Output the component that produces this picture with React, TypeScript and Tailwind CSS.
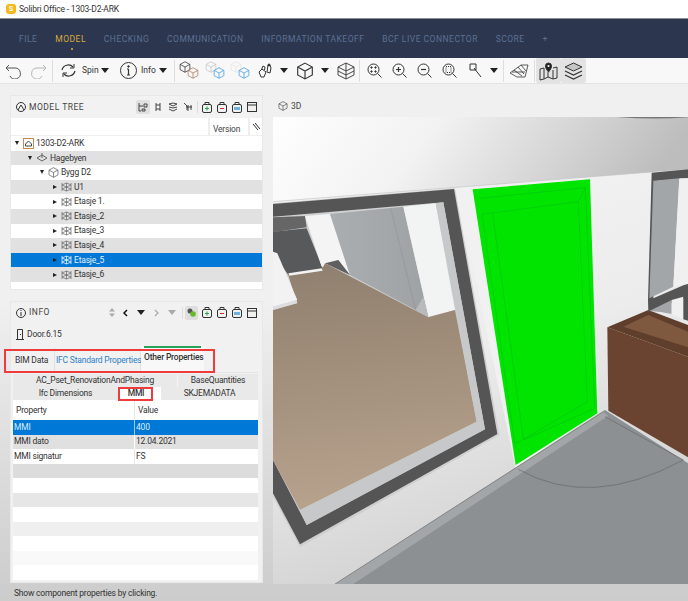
import type { ReactNode } from "react";

const FONT = "font-['Roboto','Noto_Sans',sans-serif]";

function Ic({ w = 16, h = 16, vb, cls = "", children }: { w?: number; h?: number; vb?: string; cls?: string; children: ReactNode }) {
  return (
    <svg width={w} height={h} viewBox={vb ?? `0 0 ${w} ${h}`} fill="none" stroke="#333" strokeWidth="1" className={`shrink-0 ${cls}`}>
      {children}
    </svg>
  );
}

function Caret({ cls = "" }: { cls?: string }) {
  return (
    <svg width="8" height="5" viewBox="0 0 8 5" className={`shrink-0 ${cls}`}>
      <path d="M0 0h8L4 5z" fill="#222" />
    </svg>
  );
}

function Cube({ s = 16, color = "#333", cls = "" }: { s?: number; color?: string; cls?: string }) {
  return (
    <svg width={s} height={s} viewBox="0 0 16 16" fill="none" stroke={color} strokeWidth="1" className={`shrink-0 ${cls}`}>
      <path d="M8 1l6.500 3.500v7L8 15l-6.500-3.500v-7zM1.500 4.500L8 8l6.500-3.500M8 8v7" />
    </svg>
  );
}

function Loupe({ cls = "", children }: { cls?: string; children?: ReactNode }) {
  return (
    <Ic w={15} h={15} cls={cls}>
      <circle cx="6.500" cy="6.500" r="5.500" />
      <path d="M10.500 10.500l4 4" />
      {children}
    </Ic>
  );
}

function Bag({ inner, cls = "" }: { inner?: ReactNode; cls?: string }) {
  return (
    <Ic w={10} h={11} cls={cls}>
      <rect x="0.500" y="2.500" width="9" height="8" rx="1.500" />
      <path d="M3 2.500v-2h4v2" />
      {inner}
    </Ic>
  );
}

function PanelTools() {
  return (
    <>
      <Bag inner={<path d="M5 4.500v4M3 6.500h4" stroke="#22a34a" />} />
      <Bag cls="ml-[5px]" inner={<path d="M3 6.500h4" stroke="#d22" />} />
      <Bag cls="ml-[5px]" inner={<rect x="2" y="5" width="6" height="3" fill="#6fb0e0" stroke="none" />} />
      <Ic w={10} h={10} cls="ml-[5px]">
        <rect x="0.500" y="0.500" width="9" height="9" />
        <path d="M0.500 3h9" />
      </Ic>
    </>
  );
}

function TreeGlyph({ d, cls = "" }: { d: string; cls?: string }) {
  return (
    <Ic w={10} h={10} cls={cls}>
      <path d={d} strokeWidth="0.900" />
    </Ic>
  );
}

const NAV = ["FILE", "MODEL", "CHECKING", "COMMUNICATION", "INFORMATION TAKEOFF", "BCF LIVE CONNECTOR", "SCORE", "+"];

function TopNav() {
  return (
    <div className="h-[40px] bg-[#2c364f] flex items-center pl-[19px] gap-[17.800px] border-t border-[#8a8f96]">
      {NAV.map((n) => (
        <div key={n} className="relative">
          <span className={`block leading-[12px] text-[8.500px] tracking-[0.500px] ${n === "MODEL" ? "text-[#d8a93c]" : "text-[#5d7193]"}`}>{n}</span>
          {n === "MODEL" && <span className="absolute left-1/2 top-[15px] w-[2px] h-[2px] rounded-full bg-[#e5b23a]" />}
        </div>
      ))}
    </div>
  );
}

function Toolbar() {
  return (
    <div className="h-[26px] bg-[#f8f8f8] border-b border-[#e4e4e4] flex items-center pl-[5px] text-[8.500px] text-[#333]">
      <Ic w={17} h={17}>
        <path d="M4 3L1 6l3 3M1 6h9a5.500 5.500 0 1 1-5 8" stroke="#555" />
      </Ic>
      <Ic w={17} h={17} cls="ml-[8px]">
        <path d="M13 3l3 3-3 3M16 6H7a5.500 5.500 0 1 0 5 8" stroke="#b5b5b5" />
      </Ic>
      <div className="w-px h-[22px] bg-[#ddd] ml-[5px]" />
      <Ic w={17} h={15} cls="ml-[7px]">
        <path d="M2 7a6.500 6.500 0 0 1 11-3M15 8a6.500 6.500 0 0 1-11 3" strokeWidth="1.200" />
        <path d="M14 1v4h-4M3 14v-4h4" strokeWidth="1" />
      </Ic>
      <span className="ml-[5px] w-[15px]">Spin</span>
      <Caret cls="ml-[4px]" />
      <Ic w={17} h={17} cls="ml-[11px]">
        <circle cx="8.500" cy="8.500" r="8" />
        <path d="M8.500 7v6M7 13h3M7 7h1.500" strokeWidth="1.200" />
        <circle cx="8.500" cy="4.500" r="0.800" fill="#333" />
      </Ic>
      <span className="ml-[4px] w-[15px]">Info</span>
      <Caret cls="ml-[3px]" />
      <div className="w-px h-[22px] bg-[#ddd] ml-[7px]" />
      <div className="ml-[4px] flex w-[20px] items-start">
        <Cube s={12} cls="-mt-[2px]" />
        <Cube s={12} color="#a8795a" cls="-ml-[4px] mt-[4px]" />
      </div>
      <div className="ml-[6px] flex w-[20px] items-start">
        <Cube s={12} color="#c4c4c4" cls="-mt-[2px]" />
        <Cube s={12} color="#3f9fe6" cls="-ml-[4px] mt-[4px]" />
      </div>
      <div className="ml-[5px] flex w-[20px] items-start">
        <Cube s={12} color="#e4e4e4" cls="-mt-[2px]" />
        <Cube s={12} color="#3f9fe6" cls="-ml-[4px] mt-[4px]" />
      </div>
      <Ic w={15} h={16} cls="ml-[8px]">
        <path d="M1 9l3-3 4 3-2 5H3zM3.500 6.500L5 3l2 1-.5 3M9 9l1-7h2l1 3-1 5z" />
        <circle cx="11" cy="2" r="1" fill="#333" />
      </Ic>
      <Caret cls="ml-[7px]" />
      <Cube s={18} cls="ml-[8px]" />
      <Caret cls="ml-[7px]" />
      <Ic w={18} h={18} cls="ml-[8px]">
        <path d="M1 5l8 4 8-4-8-4zM1 5v8M17 5v8M1 9l8 4 8-4M9 1v16M1 13l8 4 8-4" strokeWidth="0.900" />
      </Ic>
      <div className="w-px h-[22px] bg-[#ddd] ml-[4px]" />
      <Loupe cls="ml-[7px]">
        <circle cx="4.500" cy="4.500" r="0.700" fill="#333" />
        <circle cx="8.500" cy="4.500" r="0.700" fill="#333" />
        <circle cx="4.500" cy="8.500" r="0.700" fill="#333" />
        <circle cx="8.500" cy="8.500" r="0.700" fill="#333" />
      </Loupe>
      <Loupe cls="ml-[10px]">
        <path d="M6.500 4v5M4 6.500h5" strokeWidth="1.200" />
      </Loupe>
      <Loupe cls="ml-[10px]">
        <path d="M4 6.500h5" strokeWidth="1.200" />
      </Loupe>
      <Loupe cls="ml-[10px]">
        <rect x="4" y="3.500" width="5" height="6" strokeDasharray="1 1" />
      </Loupe>
      <Ic w={13} h={15} cls="ml-[12px]">
        <path d="M1 1h6v6H1zM5 5l7 9" />
      </Ic>
      <Caret cls="ml-[8px]" />
      <div className="w-px h-[22px] bg-[#ddd] ml-[5px]" />
      <Ic w={20} h={14} cls="ml-[5px]">
        <path d="M1 9l11-8h7l-3 12H8zM5 6l8 6M9 3l6 7M12 1l5 6M3 8h13" strokeWidth="0.800" />
      </Ic>
      <div className="w-px h-[22px] bg-[#ddd] ml-[5px]" />
      <div className="ml-[1px] w-[25px] h-[25px] bg-[#e3e3e3] rounded-[2px] flex items-center justify-center">
        <Ic w={19} h={20}>
          <path d="M1 8l4-1v11l-4 1zM5 18l4-2 5 2 4-1V6l-4 1M9 16v-5M14 18V9" />
          <path d="M9.500 11C7 8 6.500 6.500 6.500 5a3 3 0 0 1 6 0c0 1.500-.5 3-3 6z" fill="#222" />
          <circle cx="9.500" cy="5" r="1.100" fill="#fff" stroke="none" />
        </Ic>
      </div>
      <div className="w-[25px] h-[25px] bg-[#e3e3e3] rounded-[2px] flex items-center justify-center">
        <Ic w={19} h={18}>
          <path d="M9.500 1L18 5l-8.500 4L1 5z" fill="#c5c5c5" />
          <path d="M1 9l8.500 4L18 9M1 13l8.500 4 8.500-4" strokeWidth="1.200" />
        </Ic>
      </div>
    </div>
  );
}

const TREE: { label: string; level: number; open?: boolean; selected?: boolean }[] = [
  { label: "1303-D2-ARK", level: 0, open: true },
  { label: "Hagebyen", level: 1, open: true },
  { label: "Bygg D2", level: 2, open: true },
  { label: "U1", level: 3 },
  { label: "Etasje 1.", level: 3 },
  { label: "Etasje_2", level: 3 },
  { label: "Etasje_3", level: 3 },
  { label: "Etasje_4", level: 3 },
  { label: "Etasje_5", level: 3, selected: true },
  { label: "Etasje_6", level: 3 },
];

const INDENT = ["pl-[4px]", "pl-[17px]", "pl-[29px]", "pl-[42px]"];

function NodeIcon({ level, selected }: { level: number; selected?: boolean }) {
  const c = selected ? "#fff" : "#666";
  if (level === 0)
    return (
      <svg width="11" height="11" viewBox="0 0 11 11" fill="none" stroke="#444" className="ml-[4px] shrink-0">
        <rect x="0.500" y="0.500" width="10" height="10" stroke="#c58a55" />
        <path d="M2.500 8V6L5.500 3l3 3v2z" />
      </svg>
    );
  if (level === 1)
    return (
      <svg width="12" height="9" viewBox="0 0 12 9" fill="none" stroke="#666" className="ml-[4px] shrink-0">
        <path d="M1 5l5-3 5 3-5 3zM6 0v5" />
      </svg>
    );
  if (level === 2) return <Cube s={11} color="#555" cls="ml-[4px]" />;
  return (
    <svg width="11" height="10" viewBox="0 0 11 10" fill="none" stroke={c} className="ml-[4px] shrink-0">
      <path d="M1 1v8M10 1v8M1 3l4.500-2L10 3 5.500 5zM1 7l4.500-2L10 7 5.500 9zM5.500 1v8" strokeWidth="0.700" />
    </svg>
  );
}

function ModelTree() {
  return (
    <section className="h-[195px] flex flex-col bg-white border border-[#e8e8e8]">
      <div className="h-[22px] shrink-0 bg-[#f2f2f2] flex items-center pl-[5px] pr-[5px]">
        <Ic w={10} h={10}>
          <circle cx="5" cy="5" r="4.500" />
          <path d="M2 8l3-5 3 5" />
        </Ic>
        <span className="ml-[3px] text-[8.500px] tracking-[0.500px] text-[#444]">MODEL TREE</span>
        <div className="ml-auto mr-[3px] w-[14px] h-[14px] rounded-[2px] bg-[#e0e0e0] flex items-center justify-center">
          <TreeGlyph d="M1 1v8h2M1 4h4M6 2h3v3H6zM4 7h3v2H4z" />
        </div>
        <TreeGlyph cls="mr-[5px]" d="M3 1v8M7 1v8M3 3h4M3 7h4" />
        <TreeGlyph cls="mr-[5px]" d="M1 2l4-1 4 1-4 2zM1 5l4 1 4-1M1 7l4 2 4-2" />
        <TreeGlyph cls="mr-[4px]" d="M1 1l3 3v4M5 3v6M8 3v5M3 5h6" />
        <div className="w-px h-[12px] bg-[#ddd] mr-[4px]" />
        <PanelTools />
      </div>
      <div className="h-[18px] shrink-0 flex justify-end text-[8.500px] tracking-[-0.200px] text-[#444] border-b border-[#eee]">
        <div className="w-[40px] border-l-2 border-[#eee] pl-[3px] pt-[5px]">Version</div>
        <div className="w-[14px] border-l-2 border-[#eee] flex justify-center pt-[4px]">
          <Ic w={8} h={9}>
            <path d="M1 2l5 6M3 1l5 6" />
          </Ic>
        </div>
      </div>
      {TREE.map((r, i) => (
        <div
          key={r.label}
          className={`h-[14.600px] shrink-0 flex items-center text-[8.500px] tracking-[-0.200px] ${INDENT[r.level]} ${
            r.selected ? "bg-[#0078d7] text-[#e4f1fb]" : i % 2 ? "bg-[#e1e1e1] text-[#333]" : "bg-white text-[#333]"
          }`}
        >
          <svg width="4" height="4" viewBox="0 0 4 4" className="shrink-0">
            <path d={r.open ? "M0 0h4L2 4z" : "M0 0l4 2-4 2z"} fill="#222" />
          </svg>
          <NodeIcon level={r.level} selected={r.selected} />
          <span className="ml-[2px]">{r.label}</span>
        </div>
      ))}
    </section>
  );
}

const STRIPES = ["bg-[#dcdcdc]", "bg-white", "bg-[#e6e6e6]", "bg-white", "bg-[#efefef]", "bg-white", "bg-[#f9f9f9]", "bg-white"];

function InfoPanel() {
  return (
    <section className="relative h-[282px] flex flex-col bg-[#f1f1f1] border border-[#e8e8e8] text-[#333]">
      <div className="h-[21px] shrink-0 flex items-center pl-[5px] pr-[5px]">
        <Ic w={10} h={10}>
          <circle cx="5" cy="5" r="4.500" />
          <path d="M5 4v4M5 2v1" />
        </Ic>
        <span className="ml-[3px] text-[8.500px] tracking-[0.500px] text-[#444]">INFO</span>
        <svg width="6" height="9" viewBox="0 0 6 9" className="ml-auto shrink-0">
          <path d="M0 3.500L3 0l3 3.500zM0 5.500L3 9l3-3.500z" fill="#aaa" />
        </svg>
        <svg width="5" height="8" viewBox="0 0 5 8" fill="none" stroke="#111" strokeWidth="1.500" className="ml-[8px] shrink-0">
          <path d="M4 1L1 4l3 3" />
        </svg>
        <Caret cls="ml-[9px]" />
        <svg width="5" height="8" viewBox="0 0 5 8" fill="none" stroke="#aaa" strokeWidth="1.200" className="ml-[9px] shrink-0">
          <path d="M1 1l3 3-3 3" />
        </svg>
        <svg width="8" height="5" viewBox="0 0 8 5" className="ml-[9px] shrink-0">
          <path d="M0 0h8L4 5z" fill="#aaa" />
        </svg>
        <div className="w-px h-[12px] bg-[#ddd] ml-[6px]" />
        <div className="ml-[2px] mr-[4px] w-[13px] h-[14px] bg-[#dedede] rounded-[2px] flex items-center justify-center">
          <svg width="9" height="9" viewBox="0 0 9 9">
            <circle cx="3" cy="3" r="2.500" fill="#555" />
            <circle cx="6" cy="6" r="2.800" fill="#6ab82c" />
          </svg>
        </div>
        <PanelTools />
      </div>
      <div className="h-[22px] shrink-0 flex items-center pl-[5px] text-[8.500px] tracking-[-0.200px]">
        <Ic w={8} h={11}>
          <path d="M1.500 10.500V.5h5v10M0 10.500h8M4.500 5v1" />
        </Ic>
        <span className="ml-[3px]">Door.6.15</span>
      </div>
      <div className="h-[27px] shrink-0 flex items-end pl-[4px] text-[8.500px] tracking-[-0.200px] whitespace-nowrap">
        <div className="h-[24px] w-[40px] shrink-0 flex items-center border-r border-[#e2e2e2]">BIM Data</div>
        <div className="h-[24px] w-[86px] shrink-0 pl-[1px] flex items-center text-[#2f80c8] border-r border-[#e2e2e2]">IFC Standard Properties</div>
        <div className="h-[26px] w-[63px] shrink-0 bg-[#f8f8f8] flex flex-col font-medium">
          <div className="h-[2px] bg-[#27a35a] mx-[3px]" />
          <div className="mt-[3px] pl-[3px]">Other Properties</div>
        </div>
      </div>
      <div className="flex-1 ml-[2px] mr-[4px] flex flex-col text-[8.500px] tracking-[-0.200px] border-t border-[#e4e4e4] pt-[1px]">
        <div className="h-[13px] flex shrink-0">
          <div className="w-[165px] bg-[#e9e9e9] border-r border-[#f6f6f6] text-center leading-[13px]">AC_Pset_RenovationAndPhasing</div>
          <div className="flex-1 bg-[#e9e9e9] text-center leading-[13px]">BaseQuantities</div>
        </div>
        <div className="h-[13px] flex shrink-0">
          <div className="w-[105px] bg-[#e9e9e9] text-center leading-[13px]">Ifc Dimensions</div>
          <div className="w-[43px] bg-white font-medium text-center pr-[7px] leading-[12px]">MMI</div>
          <div className="flex-1 bg-[#e9e9e9] text-center leading-[13px]">SKJEMADATA</div>
        </div>
        <div className="flex-1 bg-white flex flex-col">
          <div className="h-[20px] shrink-0 grid grid-cols-[122px_1fr] items-center">
            <span className="pl-[3px] border-r border-[#e6e6e6] h-full flex items-center">Property</span>
            <span className="pl-[3px]">Value</span>
          </div>
          <div className="h-[14.500px] shrink-0 grid grid-cols-[122px_1fr] items-center bg-[#0078d7] text-[#d8ebfa]">
            <span className="pl-[1px] border-r border-[#9cc8ec] h-full flex items-center">MMI</span>
            <span className="pl-[1px]">400</span>
          </div>
          <div className="h-[14.500px] shrink-0 grid grid-cols-[122px_1fr] items-center bg-[#e0e0e0]">
            <span className="pl-[1px] border-r border-white h-full flex items-center">MMI dato</span>
            <span className="pl-[1px]">12.04.2021</span>
          </div>
          <div className="h-[14.500px] shrink-0 grid grid-cols-[122px_1fr] items-center">
            <span className="pl-[1px] border-r border-[#e6e6e6] h-full flex items-center">MMI signatur</span>
            <span className="pl-[1px]">FS</span>
          </div>
          {STRIPES.map((s, i) => (
            <div key={i} className={`h-[14.500px] shrink-0 ${s}`} />
          ))}
        </div>
        <div className="h-[3px] shrink-0" />
      </div>
      <div className="absolute left-[-7px] top-[47px] w-[211px] h-[24px] border-2 border-[#ee3b3b] pointer-events-none" />
      <div className="absolute left-[107px] top-[85px] w-[35px] h-[14px] border-2 border-[#ee3b3b] pointer-events-none" />
    </section>
  );
}

function Scene() {
  return (
    <svg viewBox="9 21 1245 1401" width="415" height="467" className="block" preserveAspectRatio="none">
      <defs>
        <linearGradient id="up" x1="0" y1="0" x2="1" y2="0.15">
          <stop offset="0" stopColor="#fefefe" />
          <stop offset="0.4" stopColor="#f2f2f2" />
          <stop offset="1" stopColor="#bdbdbd" />
        </linearGradient>
        <linearGradient id="wall" x1="0" y1="0" x2="0.3" y2="1">
          <stop offset="0" stopColor="#f6f6f6" />
          <stop offset="0.6" stopColor="#ececec" />
          <stop offset="1" stopColor="#d2d2d2" />
        </linearGradient>
        <linearGradient id="floor" x1="0" y1="0" x2="0.1" y2="1">
          <stop offset="0" stopColor="#8f7f6e" />
          <stop offset="1" stopColor="#b7a28c" />
        </linearGradient>
        <linearGradient id="gwall" x1="0" y1="0" x2="1" y2="0">
          <stop offset="0" stopColor="#aaaeb0" />
          <stop offset="1" stopColor="#9ea2a5" />
        </linearGradient>
      </defs>
      <rect x="9" y="21" width="1245" height="1401" fill="url(#wall)" />
      <path d="M9 21H1254V178L9 275z" fill="url(#up)" />
      <path d="M9 275L1145 186" stroke="#c4c4c4" strokeWidth="2" fill="none" />
      <path d="M1040 21H1254V22Q1150 30 1040 21z" fill="#777" />

      {/* window on the left */}
      <path d="M9 280L555 235L688 975L90 1312L9 1160z" fill="#cfcfcf" />
      <path d="M9 282L552 237L682 972L90 1303L9 1150z" fill="#555" />
      <path d="M9 320L520 277L645 958L110 1245L9 1050z" fill="#cfd1d2" />
      <path d="M9 365L110 355L160 480L55 495L9 430z" fill="#57595b" />
      <path d="M9 322L105 318L110 352L9 367z" fill="#666" />
      <path d="M105 318L180 312L240 495L205 450L155 470z" fill="#f4f4f4" />
      <path d="M180 312L400 290L475 620L240 495z" fill="url(#gwall)" />
      <path d="M362 294L437 600" stroke="#83878a" fill="none" />
      <path d="M400 290L497 280L555 600L475 620z" fill="#f2f3f3" />
      <path d="M437 600L475 620L460 560z" fill="#b8bbbc" />
      <path d="M165 460L240 495L205 450z" fill="#5d5f61" />
      <path d="M9 600L80 578L55 495L155 480L165 460L475 622L555 600L620 935L90 1200L9 1050z" fill="url(#floor)" />
      <path d="M9 425L22 430L82 570L9 590z" fill="#f2f2f2" />
      <path d="M9 590L80 570L82 580L9 600z" fill="#ddd" />
      <path d="M55 490L155 475L158 482L58 497z" fill="#f2f2f2" />
      <path d="M497 280L520 277L645 958L110 1245L90 1200L620 935z" fill="#c6c8c9" />

      {/* door */}
      <path d="M560 235L968 205L985 905L737 1075z" fill="#f1f1f1" />
      <path d="M608 238L960 208L982 910L737 1065z" fill="#00e400" />
      <g fill="none" stroke="#00b81c" strokeWidth="1.500">
        <path d="M628 265L946 233L974 895L738 1000" />
        <path d="M636 313L925 275L952 875L760 988L668 310" />
        <path d="M636 313L735 1005M928 272L946 233" />
      </g>

      {/* floor */}
      <path d="M195 1422L1005 900L1254 1060V1422z" fill="#8c9093" />
      <path d="M195 1422L1000 905L1015 917L250 1422z" fill="#a3a6a8" />
      <path d="M195 1422L1000 905" stroke="#777" strokeWidth="2" fill="none" />
      <path d="M745 1078Q960 1200 1240 1050L1005 920" stroke="#63666a" strokeWidth="2" fill="none" />

      {/* cabinet */}
      <path d="M1012 652L1254 740V1042L1015 902z" fill="#6a4430" />
      <path d="M1012 652L1135 600L1254 645V740z" fill="#5f3e2c" />
      <path d="M1060 650L1135 615L1254 665V712z" fill="#7f5840" />

      {/* window on the right */}
      <path d="M1145 188L1254 178V205L1165 212L1150 565L1254 520V560L1135 605L1134 570z" fill="#555" />
      <path d="M1150 212L1228 205L1210 530L1138 565z" fill="#a2a6a9" />
      <path d="M1228 205H1254V522L1210 530z" fill="#f0f0f0" />
      <path d="M1138 603L1205 570V612L1172 606z" fill="#a2a6a9" />
      <path d="M1205 570L1240 560V628L1205 612z" fill="#f0f0f0" />
      <path d="M1240 560H1254V632L1240 628z" fill="#555" />
    </svg>
  );
}

export default function App() {
  return (
    <div className={`w-[688px] h-[601px] overflow-hidden flex flex-col bg-gradient-to-b from-[#f0f0f0] from-50% to-[#cccccc] ${FONT}`}>
      <div className="h-[18px] shrink-0 bg-white flex items-center pl-[6px]">
        <div className="w-[10px] h-[10px] rounded-[3px] bg-[#f5b81f] text-white text-[7px] font-bold leading-[10px] text-center">S</div>
        <span className="ml-[3px] text-[8.500px] tracking-[-0.200px] text-[#333]">Solibri Office - 1303-D2-ARK</span>
      </div>
      <TopNav />
      <Toolbar />
      <div className="flex-1 flex min-h-0">
        <div className="w-[253px] shrink-0 ml-[10px] mr-[10px] pt-[11px] flex flex-col gap-[11px]">
          <ModelTree />
          <InfoPanel />
        </div>
        <div className="flex-1 min-w-0 pt-[11px]">
          <div className="h-[22px] flex items-center pl-[5px] text-[8.500px] text-[#444]">
            <Cube s={10} color="#444" />
            <span className="ml-[3px]">3D</span>
          </div>
          <Scene />
        </div>
      </div>
      <div className="h-[16px] shrink-0 flex items-center pl-[14px] text-[8.500px] tracking-[-0.200px] text-[#333]">Show component properties by clicking.</div>
    </div>
  );
}
